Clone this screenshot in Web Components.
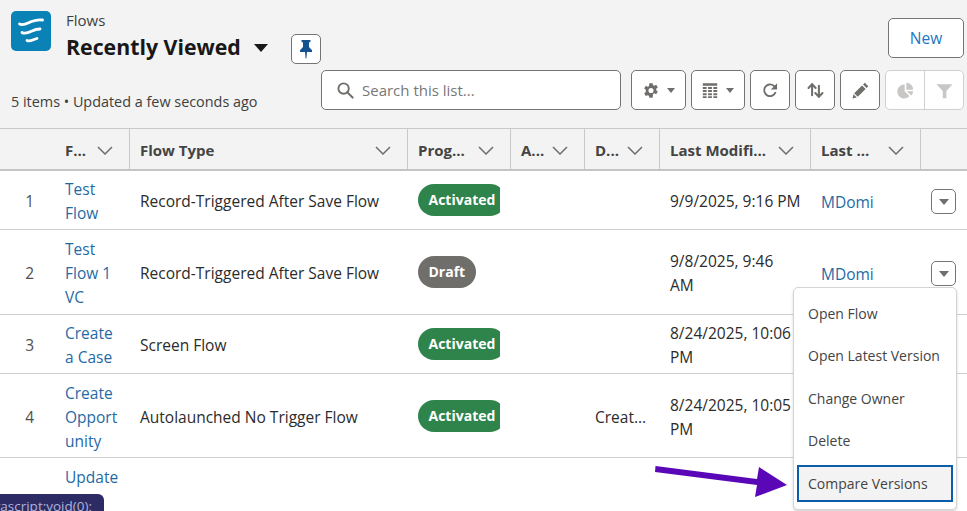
<!DOCTYPE html>
<html>
<head>
<meta charset="utf-8">
<title>Flows</title>
<style>
  html, body { margin: 0; height: 511px; overflow: hidden; background: #fff; }
  body { position: relative; font-family: "Open Sans", "Noto Sans", sans-serif; color: #181818; }
</style>
</head>
<body>
<list-header></list-header>
<flow-table>
  <flow-row head>
    <head-cell></head-cell>
    <head-cell>F...</head-cell>
    <head-cell sep>Flow Type</head-cell>
    <head-cell sep>Prog...</head-cell>
    <head-cell sep>A...</head-cell>
    <head-cell sep>D...</head-cell>
    <head-cell sep>Last Modifi...</head-cell>
    <head-cell sep>Last ...</head-cell>
    <head-cell sep></head-cell>
  </flow-row>
  <flow-row h="59">
    <body-cell num>1</body-cell>
    <body-cell><a-link>Test<br>Flow</a-link></body-cell>
    <body-cell>Record-Triggered After Save Flow</body-cell>
    <body-cell><status-pill>Activated</status-pill></body-cell>
    <body-cell></body-cell>
    <body-cell></body-cell>
    <body-cell>9/9/2025, 9:16 PM</body-cell>
    <body-cell low><a-link>MDomi</a-link></body-cell>
    <body-cell low><row-action></row-action></body-cell>
  </flow-row>
  <flow-row h="85">
    <body-cell num>2</body-cell>
    <body-cell><a-link>Test<br>Flow 1<br>VC</a-link></body-cell>
    <body-cell>Record-Triggered After Save Flow</body-cell>
    <body-cell><status-pill draft>Draft</status-pill></body-cell>
    <body-cell></body-cell>
    <body-cell></body-cell>
    <body-cell>9/8/2025, 9:46<br>AM</body-cell>
    <body-cell low><a-link>MDomi</a-link></body-cell>
    <body-cell low><row-action></row-action></body-cell>
  </flow-row>
  <flow-row h="59">
    <body-cell num>3</body-cell>
    <body-cell><a-link>Create<br>a Case</a-link></body-cell>
    <body-cell>Screen Flow</body-cell>
    <body-cell><status-pill>Activated</status-pill></body-cell>
    <body-cell></body-cell>
    <body-cell></body-cell>
    <body-cell>8/24/2025, 10:06<br>PM</body-cell>
    <body-cell></body-cell>
    <body-cell></body-cell>
  </flow-row>
  <flow-row h="84">
    <body-cell num>4</body-cell>
    <body-cell><a-link>Create<br>Opport<br>unity</a-link></body-cell>
    <body-cell>Autolaunched No Trigger Flow</body-cell>
    <body-cell><status-pill>Activated</status-pill></body-cell>
    <body-cell></body-cell>
    <body-cell>Creat...</body-cell>
    <body-cell>8/24/2025, 10:05<br>PM</body-cell>
    <body-cell></body-cell>
    <body-cell></body-cell>
  </flow-row>
  <flow-row h="53" last>
    <body-cell num></body-cell>
    <body-cell top><a-link>Update</a-link></body-cell>
  </flow-row>
</flow-table>
<action-menu>
  <menu-item>Open Flow</menu-item>
  <menu-item>Open Latest Version</menu-item>
  <menu-item>Change Owner</menu-item>
  <menu-item>Delete</menu-item>
  <menu-item focused>Compare Versions</menu-item>
</action-menu>
<callout-arrow></callout-arrow>
<status-tip>javascript:void(0);</status-tip>

<script>
// column template shared by all rows
const COLS = '54px 75px 278px 103px 74px 75px 151px 110px 47px';

const ICONS = {
  gear: '<path fill="#706e6b" fill-rule="evenodd" d="M8 .8h4l.6 2.5 1.6.8 2.3-1.200 2 3.400-2 1.500v1.800l2 1.600-2 3.400-2.300-1.100-1.600.9L12 19.200H8l-.6-2.500-1.600-.9-2.300 1.100-2-3.400 2-1.600V9.100l-2-1.500 2-3.400 2.300 1.200 1.600-.8zM10 6.800a3.200 3.200 0 1 0 0 6.400 3.200 3.200 0 0 0 0-6.400z"/>',
  table: '<path fill="#706e6b" d="M1 1h18v3H1zM1 5.500h4.800v2.600H1zm6.600 0h4.800v2.600H7.600zm6.600 0H19v2.600h-4.800zM1 9.400h4.800V12H1zm6.600 0h4.800V12H7.600zm6.600 0H19V12h-4.800zM1 13.300h4.800v2.600H1zm6.600 0h4.800v2.600H7.600zm6.600 0H19v2.600h-4.800zM1 17.200h4.800v2.300H1zm6.600 0h4.800v2.300H7.600zm6.600 0H19v2.300h-4.800z"/>',
  refresh: '<path fill="none" stroke="#706e6b" stroke-width="2.300" d="M17 12.500A7.300 7.300 0 1 1 14.800 4.800l1.900 1.800"/><path fill="#706e6b" d="M18.800 1.500v7.800H11z"/>',
  sort: '<path fill="none" stroke="#706e6b" stroke-width="2.400" stroke-linecap="round" stroke-linejoin="round" d="M6 15.500V2.500M1.800 7 6 2.500 10.200 7M14 4.500v13M9.800 13l4.200 4.500 4.200-4.500"/>',
  pencil: '<path fill="#706e6b" d="M15 .8 19.200 5l-2 2L13 2.800zM11.800 4 16 8.200 6.800 17.400 2.600 13.200zM1.800 14.400 5.600 18.200.6 19.400z"/>',
  pie: '<path fill="#c9c7c5" d="M9 3v8l5.700 5.600A8.200 8.200 0 1 1 9 3z"/><path fill="#c9c7c5" d="M11 1a8 8 0 0 1 8 8h-8z"/><path fill="#c9c7c5" d="M11.600 11H19a8.200 8.200 0 0 1-2.300 5z"/>',
  funnel: '<path fill="#c9c7c5" d="M.5 2.500h19L12.200 10.500V19H8V10.500z"/>'
};

class ListHeader extends HTMLElement {
  constructor() {
    super();
    this.attachShadow({ mode: 'open' }).innerHTML = `
    <style>
      :host { display: block; height: 128px; background: #f3f3f3; border-bottom: 1px solid #c9c9c9; box-sizing: content-box; }
      .top { display: flex; justify-content: space-between; height: 59px; padding: 11px 3px 0 11px; box-sizing: content-box; }
      .bottom { display: flex; justify-content: space-between; padding: 0 3px 0 11px; }
      .title { display: flex; gap: 15px; }
      .crumb { font-size: 15px; line-height: 19px; color: #3e3e3c; }
      .name { font-size: 21.3px; font-weight: 700; line-height: 34px; color: #181818; display: flex; align-items: center; gap: 13px; white-space: nowrap; }
      .caret { width: 0; height: 0; border: 7px solid transparent; border-top: 8px solid #181818; border-bottom: 0; margin-top: 2px; }
      .pin { width: 30px; height: 30px; box-sizing: border-box; border: 1px solid #747474; border-radius: 5px; background: #fff; display: flex; align-items: center; justify-content: center; margin: 23px 0 0 8px; }
      .count { font-size: 14.4px; color: #3e3e3c; margin-top: 22px; line-height: 20px; white-space: nowrap; }
      .new { width: 76px; height: 40px; box-sizing: border-box; border: 1px solid #747474; border-radius: 5px; background: #fff; color: #1b77c5; font-size: 15.5px; display: flex; align-items: center; justify-content: center; margin-top: 7px; }
      .tools { display: flex; gap: 5px; }
      .search { width: 300px; height: 40px; box-sizing: border-box; border: 1px solid #747474; border-radius: 5px; background: #fff; display: flex; align-items: center; gap: 8px; padding-left: 15px; color: #777; font-size: 15px; margin-right: 5px; }
      .btn { height: 40px; box-sizing: border-box; border: 1px solid #747474; border-radius: 5px; background: #fff; display: flex; align-items: center; justify-content: center; gap: 8px; width: 40px; }
      .btn.wide { width: 55px; }
      .btn.wider { width: 54px; }
      .tri { width: 0; height: 0; border: 4px solid transparent; border-top: 5px solid #706e6b; border-bottom: 0; }
      .group { display: flex; width: 79px; height: 40px; box-sizing: border-box; border: 1px solid #d0d0d0; border-radius: 5px; background: #fff; }
      .group span { flex: 1; display: flex; align-items: center; justify-content: center; }
      .group span + span { border-left: 1px solid #d0d0d0; }
    </style>
    <div class="top">
      <div class="title">
        <svg width="40" height="40" viewBox="0 0 40 40"><rect width="40" height="40" rx="5" fill="#0b82b5"/>
          <g fill="none" stroke="#fff" stroke-width="2.800" stroke-linecap="round">
            <path d="M8.500 13c4 2 8-1 12-2.500s8-2 11-1.500"/>
            <path d="M11 21.500c3 2 7 0 10-1.500s5-2 8-2"/>
            <path d="M16 29.500c3 1.500 6-1 10-2"/>
          </g>
        </svg>
        <div>
          <div class="crumb">Flows</div>
          <div class="name">Recently Viewed <span class="caret"></span></div>
        </div>
        <div class="pin"><svg width="14" height="20" viewBox="0 0 14 20"><path fill="#16518f" d="M2.500 1h9v1.800L10 3.500v4.500l3 3.200V13H8l-.6 6.500h-.8L6 13H1v-1.800L4 8V3.500l-1.500-.7z"/></svg></div>
      </div>
      <div class="new">New</div>
    </div>
    <div class="bottom">
      <div class="count">5 items • Updated a few seconds ago</div>
      <div class="tools">
        <div class="search">
          <svg width="17" height="17" viewBox="0 0 18 18"><circle cx="7" cy="7" r="5.500" fill="none" stroke="#706e6b" stroke-width="2"/><path stroke="#706e6b" stroke-width="2.200" stroke-linecap="round" d="M11 11l5.500 5.500"/></svg>
          Search this list...
        </div>
        <div class="btn wide"><svg width="16" height="17" viewBox="0 0 20 20">${ICONS.gear}</svg><span class="tri"></span></div>
        <div class="btn wider"><svg width="16" height="17" viewBox="0 0 20 20">${ICONS.table}</svg><span class="tri"></span></div>
        <div class="btn"><svg width="16" height="16" viewBox="0 0 20 20">${ICONS.refresh}</svg></div>
        <div class="btn"><svg width="17" height="17" viewBox="0 0 20 20">${ICONS.sort}</svg></div>
        <div class="btn"><svg width="17" height="17" viewBox="0 0 20 20">${ICONS.pencil}</svg></div>
        <div class="group"><span><svg width="17" height="17" viewBox="0 0 20 20">${ICONS.pie}</svg></span><span><svg width="17" height="17" viewBox="0 0 20 20">${ICONS.funnel}</svg></span></div>
      </div>
    </div>`;
  }
}

class FlowTable extends HTMLElement {
  constructor() {
    super();
    this.attachShadow({ mode: 'open' }).innerHTML = `
    <style>:host { display: block; background: #fff; }</style><slot></slot>`;
  }
}

class FlowRow extends HTMLElement {
  constructor() {
    super();
    const head = this.hasAttribute('head');
    const h = head ? 42 : (this.getAttribute('h') || 59);
    this.attachShadow({ mode: 'open' }).innerHTML = `
    <style>
      :host { display: grid; grid-template-columns: ${COLS}; height: ${h}px; box-sizing: border-box;
        border-bottom: ${head ? '2px solid #c4c4c4' : '1px solid #cfcfcf'}; background: ${head ? '#f3f3f3' : '#fff'}; }
      :host([last]) { border-bottom: 0; }
    </style><slot></slot>`;
  }
}

class HeadCell extends HTMLElement {
  constructor() {
    super();
    this.attachShadow({ mode: 'open' }).innerHTML = `
    <style>
      :host { display: flex; align-items: center; justify-content: space-between; padding: 2px 16px 0 11px; box-sizing: border-box; overflow: hidden;
        font-size: 15px; font-weight: 700; color: #444; white-space: nowrap; }
      :host([sep]) { border-left: 1px solid #c9c9c9; padding-left: 10px; }
      svg { flex: none; }
    </style><span><slot></slot></span><svg width="16" height="9" viewBox="0 0 16 9"><path fill="none" stroke="#706e6b" stroke-width="1.500" d="M1 1l7 7 7-7"/></svg>`;
    if (!this.textContent.trim()) this.shadowRoot.querySelector('svg').remove();
  }
}

class BodyCell extends HTMLElement {
  constructor() {
    super();
    this.attachShadow({ mode: 'open' }).innerHTML = `
    <style>
      :host { display: flex; align-items: center; padding: 2px 0 0 11px; box-sizing: border-box; overflow: hidden;
        font-size: 15.5px; line-height: 24px; color: #2b2b2b; min-width: 0; white-space: nowrap; }
      :host([num]) { justify-content: flex-end; padding: 2px 20px 0 0; color: #514f4d; }
      :host([low]) { padding-top: 3px; }
      :host([top]) { align-items: flex-start; padding-top: 7px; }
    </style><slot></slot>`;
  }
}

class ALink extends HTMLElement {
  constructor() {
    super();
    this.attachShadow({ mode: 'open' }).innerHTML = `
    <style>:host { display: block; color: #1f6aa5; }</style><slot></slot>`;
  }
}

class StatusPill extends HTMLElement {
  constructor() {
    super();
    this.attachShadow({ mode: 'open' }).innerHTML = `
    <style>
      :host { display: block; max-width: 82px; overflow: hidden; flex: none; margin-top: -2px; }
      span { display: inline-flex; align-items: center; height: 32px; padding: 0 10.5px; border-radius: 16px; background: #2e844a; color: #fff; font-size: 14px; font-weight: 700; white-space: nowrap; vertical-align: top; }
      :host([draft]) span { background: #706e6b; }
    </style><span><slot></slot></span>`;
  }
}

class RowAction extends HTMLElement {
  constructor() {
    super();
    this.attachShadow({ mode: 'open' }).innerHTML = `
    <style>
      :host { display: flex; align-items: center; justify-content: center; width: 25px; height: 25px; box-sizing: border-box; border: 1px solid #747474; border-radius: 5px; background: #fff; }
      i { width: 0; height: 0; border: 5px solid transparent; border-top: 6px solid #706e6b; border-bottom: 0; }
    </style><i></i>`;
  }
}

class ActionMenu extends HTMLElement {
  constructor() {
    super();
    this.attachShadow({ mode: 'open' }).innerHTML = `
    <style>
      :host { position: absolute; left: 793px; top: 287px; width: 164px; height: 223px; box-sizing: border-box; padding: 4px 3px 3px; background: #fff;
        border: 1px solid #d4d4d4; border-radius: 5px; box-shadow: 0 2px 3px rgba(0,0,0,.16); display: flex; flex-direction: column; }
    </style><slot></slot>`;
  }
}

class MenuItem extends HTMLElement {
  constructor() {
    super();
    this.attachShadow({ mode: 'open' }).innerHTML = `
    <style>
      :host { display: flex; align-items: center; height: 42.5px; flex: none; padding-left: 11px; box-sizing: border-box; font-size: 14px; color: #444; white-space: nowrap; }
      :host([focused]) { height: 37px; margin-top: 3px; padding-left: 9px; background: #f3f3f3; border: 2px solid #0b5cab; }
    </style><slot></slot>`;
  }
}

class CalloutArrow extends HTMLElement {
  constructor() {
    super();
    this.attachShadow({ mode: 'open' }).innerHTML = `
    <style>:host { position: absolute; left: 650px; top: 460px; width: 140px; height: 40px; } svg { display: block; }</style>
    <svg width="140" height="40" viewBox="650 460 140 40"><path fill="#5a07b8" d="M655.500 466 757 479 759 467 787 485 755 497 757 485 655 472z"/></svg>`;
  }
}

class StatusTip extends HTMLElement {
  constructor() {
    super();
    this.attachShadow({ mode: 'open' }).innerHTML = `
    <style>
      :host { position: absolute; left: 0; top: 494px; width: 104px; height: 17px; overflow: hidden; background: #2d2b63; border-top-right-radius: 6px; color: #aeb4dc; font-size: 13.5px; line-height: 24px; display: flex; justify-content: flex-end; white-space: nowrap; padding-right: 12px; box-sizing: border-box; }
    </style><slot></slot>`;
  }
}

customElements.define('list-header', ListHeader);
customElements.define('flow-table', FlowTable);
customElements.define('flow-row', FlowRow);
customElements.define('head-cell', HeadCell);
customElements.define('body-cell', BodyCell);
customElements.define('a-link', ALink);
customElements.define('status-pill', StatusPill);
customElements.define('row-action', RowAction);
customElements.define('action-menu', ActionMenu);
customElements.define('menu-item', MenuItem);
customElements.define('callout-arrow', CalloutArrow);
customElements.define('status-tip', StatusTip);
</script>
</body>
</html>
